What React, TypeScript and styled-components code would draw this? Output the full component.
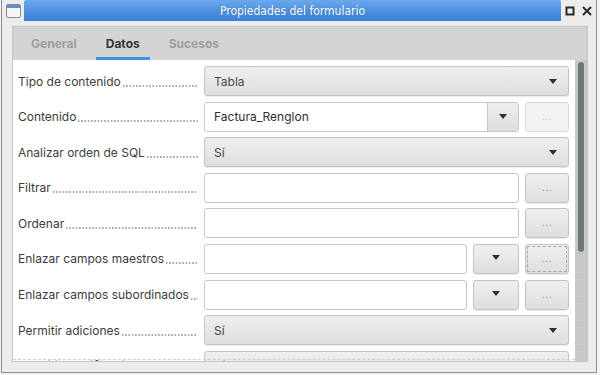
import React from "react";
import styled, { createGlobalStyle } from "styled-components";

const GlobalStyle = createGlobalStyle`
  html, body {
    margin: 0;
    padding: 0;
    background: #f2f2f2;
  }
  body {
    font-family: Inter, "Noto Sans", sans-serif;
  }
`;

const Window = styled.div`
  width: 596px;
  height: 373px;
  margin-left: 1px;
  box-sizing: border-box;
  background: #ececec;
  border: 1px solid #8e8e8e;
  border-top: none;
  display: flex;
  flex-direction: column;
  overflow: hidden;
`;

const TitleBar = styled.div`
  height: 21px;
  display: flex;
  align-items: stretch;
  flex-shrink: 0;
`;

const AppIcon = styled.div`
  width: 22px;
  display: flex;
  align-items: center;
  justify-content: center;
`;

const Title = styled.div`
  flex: 1;
  background: linear-gradient(#6ba9ec, #4c8fdf 55%, #3b80d6);
  border-radius: 2px 2px 0 0;
  color: #ffffff;
  font-family: "DejaVu Sans Condensed", "DejaVu Sans", sans-serif;
  font-size: 12px;
  display: flex;
  align-items: center;
  justify-content: center;
  text-shadow: 0 0 1px rgba(0, 0, 0, 0.3);
`;

const WinButtons = styled.div`
  width: 33px;
  display: flex;
  align-items: center;
  justify-content: space-around;
  padding: 0 1px;
`;

const Panel = styled.div`
  margin: 5px 8px 0 10px;
  height: 336px;
  box-sizing: border-box;
  background: #d4d4d4;
  border: 1px solid #c4c4c4;
  display: flex;
  flex-direction: column;
`;

const TabBar = styled.div`
  height: 33px;
  display: flex;
  padding-left: 8px;
  gap: 9px;
  flex-shrink: 0;
`;

const Tab = styled.div<{ $active?: boolean }>`
  padding: 3px 10px 0;
  display: flex;
  align-items: center;
  font-size: 12px;
  font-weight: 700;
  color: ${(p) => (p.$active ? "#343434" : "#9c9c9c")};
  border-bottom: 3px solid ${(p) => (p.$active ? "#3f8fe2" : "transparent")};
`;

const Body = styled.div`
  flex: 1;
  display: flex;
  min-height: 0;
`;

const Viewport = styled.div`
  flex: 1;
  background: #ffffff;
  overflow: hidden;
  position: relative;

  &::after {
    content: "";
    position: absolute;
    left: 0;
    right: 0;
    bottom: 1px;
    border-bottom: 1px dashed #cfcfcf;
  }
`;

const Form = styled.div`
  display: grid;
  grid-template-columns: 180px 1fr;
  grid-auto-rows: 30px;
  column-gap: 6px;
  row-gap: 5.6px;
  padding: 6px 6px 0 5px;
`;

const Label = styled.div`
  display: flex;
  align-items: center;
  white-space: nowrap;
  overflow: hidden;
  font-size: 12px;
  color: #3c3c3c;
`;

/* dotted leader after each label, drawn as a dot pattern */
const Leader = styled.span`
  flex: 1;
  align-self: center;
  height: 10px;
  margin-top: 3px;
  background-image: radial-gradient(circle, #5c5c5c 0.55px, transparent 0.75px);
  background-size: 3.3px 2px;
  background-position: 1px 7px;
  background-repeat: repeat-x;
`;

const Field = styled.div`
  display: flex;
  gap: 6px;
  min-width: 0;
`;

const Combo = styled.div`
  flex: 1;
  box-sizing: border-box;
  display: flex;
  align-items: center;
  justify-content: space-between;
  padding: 0 11px 0 9px;
  border: 1px solid #c3c3c3;
  border-radius: 3px;
  background: linear-gradient(#efefef, #dedede);
  box-shadow: 0 1px 0 rgba(0, 0, 0, 0.08);
  font-size: 12px;
  color: #4a4a4a;
`;

const Entry = styled.div`
  flex: 1;
  box-sizing: border-box;
  display: flex;
  align-items: center;
  border: 1px solid #c6c6c6;
  border-radius: 3px;
  background: #ffffff;
  padding: 0 9px;
  font-size: 12px;
  color: #2e2e2e;
  min-width: 0;
`;

const EntryCombo = styled.div`
  flex: 1;
  display: flex;
  border: 1px solid #c6c6c6;
  border-radius: 3px;
  overflow: hidden;
`;

const EntryText = styled.div`
  flex: 1;
  background: #ffffff;
  display: flex;
  align-items: center;
  padding: 0 9px;
  font-size: 12px;
  color: #2e2e2e;
`;

const AttachedArrow = styled.div`
  width: 30px;
  border-left: 1px solid #c6c6c6;
  background: linear-gradient(#eeeeee, #dddddd);
  display: flex;
  align-items: center;
  justify-content: center;
`;

const Button = styled.div<{ $w: number; $disabled?: boolean; $focus?: boolean }>`
  width: ${(p) => p.$w}px;
  flex-shrink: 0;
  box-sizing: border-box;
  display: flex;
  align-items: center;
  justify-content: center;
  border: 1px solid ${(p) => (p.$disabled ? "#d9d9d9" : "#c3c3c3")};
  border-radius: 3px;
  background: ${(p) =>
    p.$disabled ? "#f3f3f3" : "linear-gradient(#efefef, #dedede)"};
  box-shadow: ${(p) => (p.$disabled ? "none" : "0 1px 0 rgba(0,0,0,0.08)")};
  outline: ${(p) => (p.$focus ? "1px dashed #a8a8a8" : "none")};
  outline-offset: -3px;
  font-size: 10px;
  color: ${(p) => (p.$disabled ? "#c2c2c2" : "#8a8a8a")};
  letter-spacing: 0.5px;
  padding-bottom: 2px;
`;

const Arrow = styled.span`
  width: 0;
  height: 0;
  border-left: 4.5px solid transparent;
  border-right: 4.5px solid transparent;
  border-top: 5px solid #2f2f2f;
`;

const Trough = styled.div`
  width: 12px;
  background-color: #c9c9c9;
  background-image: radial-gradient(#bdbdbd 0.6px, transparent 0.7px);
  background-size: 3px 3px;
  padding: 2px 3px;
  box-sizing: border-box;
`;

const Thumb = styled.div`
  height: 190px;
  background: #6f7878;
  border-radius: 3px;
`;

const Row: React.FC<{ label: string; children: React.ReactNode }> = ({
  label,
  children,
}) => (
  <>
    <Label>
      {label}
      <Leader />
    </Label>
    <Field>{children}</Field>
  </>
);

const ComboField: React.FC<{ value: string }> = ({ value }) => (
  <Combo>
    {value}
    <Arrow />
  </Combo>
);

export default function App() {
  return (
    <>
      <GlobalStyle />
      <Window>
        <TitleBar>
          <AppIcon>
            <svg width="15" height="14" viewBox="0 0 15 14">
              <rect x="0.5" y="0.5" width="14" height="13" rx="1.5" fill="#f4f4f4" stroke="#8a8a8a" />
              <rect x="1" y="1" width="13" height="3" fill="#5b8fd0" />
            </svg>
          </AppIcon>
          <Title>Propiedades del formulario</Title>
          <WinButtons>
            <svg width="10" height="10" viewBox="0 0 10 10">
              <rect x="1.5" y="1.5" width="7" height="7" fill="none" stroke="#2a2a2a" strokeWidth="2" />
            </svg>
            <svg width="10" height="10" viewBox="0 0 10 10">
              <path d="M1 1 L9 9 M9 1 L1 9" stroke="#2a2a2a" strokeWidth="2" />
            </svg>
          </WinButtons>
        </TitleBar>
        <Panel>
          <TabBar>
            <Tab>General</Tab>
            <Tab $active>Datos</Tab>
            <Tab>Sucesos</Tab>
          </TabBar>
          <Body>
            <Viewport>
              <Form>
                <Row label="Tipo de contenido">
                  <ComboField value="Tabla" />
                </Row>
                <Row label="Contenido">
                  <EntryCombo>
                    <EntryText>Factura_Renglon</EntryText>
                    <AttachedArrow>
                      <Arrow />
                    </AttachedArrow>
                  </EntryCombo>
                  <Button $w={44} $disabled>
                    ...
                  </Button>
                </Row>
                <Row label="Analizar orden de SQL">
                  <ComboField value="Sí" />
                </Row>
                <Row label="Filtrar">
                  <Entry />
                  <Button $w={44}>...</Button>
                </Row>
                <Row label="Ordenar">
                  <Entry />
                  <Button $w={44}>...</Button>
                </Row>
                <Row label="Enlazar campos maestros">
                  <Entry />
                  <Button $w={46}>
                    <Arrow />
                  </Button>
                  <Button $w={44} $focus>
                    ...
                  </Button>
                </Row>
                <Row label="Enlazar campos subordinados">
                  <Entry />
                  <Button $w={46}>
                    <Arrow />
                  </Button>
                  <Button $w={44}>...</Button>
                </Row>
                <Row label="Permitir adiciones">
                  <ComboField value="Sí" />
                </Row>
                <Row label="Permitir modificaciones">
                  <ComboField value="Sí" />
                </Row>
              </Form>
            </Viewport>
            <Trough>
              <Thumb />
            </Trough>
          </Body>
        </Panel>
      </Window>
    </>
  );
}
